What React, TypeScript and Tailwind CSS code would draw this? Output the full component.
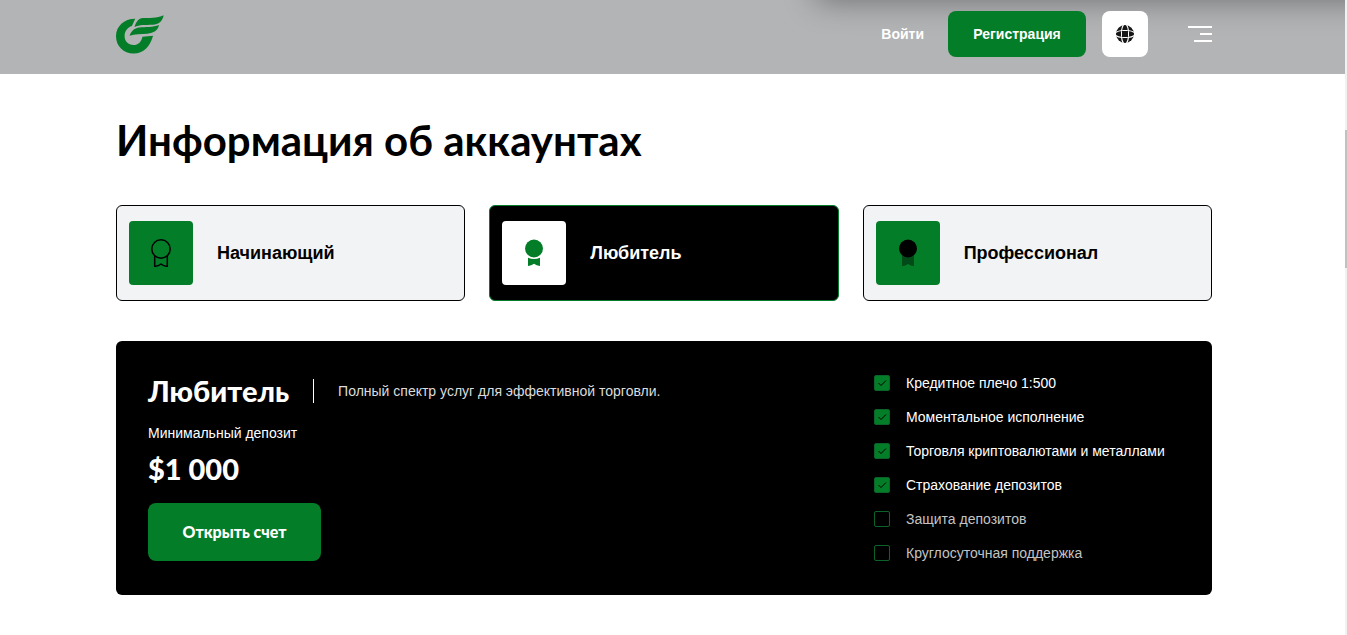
import { useState } from 'react';
import clsx from 'clsx';

type Level = 'outline' | 'split' | 'solid';

const accounts: { name: string; level: Level }[] = [
  { name: 'Начинающий', level: 'outline' },
  { name: 'Любитель', level: 'split' },
  { name: 'Профессионал', level: 'solid' },
];

const features = [
  { label: 'Кредитное плечо 1:500', enabled: true },
  { label: 'Моментальное исполнение', enabled: true },
  { label: 'Торговля криптовалютами и металлами', enabled: true },
  { label: 'Страхование депозитов', enabled: true },
  { label: 'Защита депозитов', enabled: false },
  { label: 'Круглосуточная поддержка', enabled: false },
];

function Logo() {
  return (
    <svg viewBox="48 43 145 117" className="h-[39px] w-12" fill="#047d28" aria-hidden="true">
      <path d="M106 54C72 54 48 77 48 107c0 30 23 52 53 52 31 0 49-21 59-54l-32 3c-4 16-13 25-27 25-16 0-27-11-27-26 0-16 9-27 22-31z" />
      <path d="M192 43c-20 9-46 8-63 9-13 2-19 9-25 27 15-8 32-6 55-7 18-1 29-10 33-29z" />
      <path d="M178 73c-18 7-42 6-60 7-14 2-24 10-29 25 16-6 34-4 54-6 19-2 31-9 35-26z" />
    </svg>
  );
}

function Globe() {
  return (
    <svg viewBox="0 0 20 20" className="size-5" aria-hidden="true">
      <circle cx="10" cy="10" r="9" fill="#161616" />
      <rect x="6.500" y="6.500" width="7" height="7" rx="1" fill="none" stroke="#fff" />
      <g fill="none" stroke="#fff" strokeWidth="1.200">
        <path d="M6.500 7Q6.800 3.500 8.500 0.500M13.500 7Q13.200 3.500 11.500 0.500M6.500 13Q6.800 16.500 8.500 19.500M13.500 13Q13.200 16.500 11.500 19.500" />
        <path d="M7 6.500Q3.500 6.800 0.500 8.500M7 13.500Q3.500 13.200 0.500 11.500M13 6.500Q16.500 6.800 19.500 8.500M13 13.500Q16.500 13.200 19.500 11.500" />
      </g>
    </svg>
  );
}

function Medal({ level }: { level: Level }) {
  if (level === 'outline') {
    return (
      <svg viewBox="0 0 32 32" className="size-8" fill="none" stroke="#000" strokeWidth="1.500" strokeLinejoin="round" aria-hidden="true">
        <circle cx="16" cy="12" r="9.200" />
        <path d="M9.700 19v10.200q3.500.300 6.300-2.200 2.800 2.500 6.300 2.200V19" />
      </svg>
    );
  }
  return (
    <svg viewBox="0 0 32 32" className={clsx('size-8', level === 'split' ? 'fill-[#047d28]' : 'fill-black')} aria-hidden="true">
      {level === 'split' ? (
        <path d="M10 20.800q6 2.500 12 0V29q-3.500-.200-6-2.200-2.500 2-6 2.200z" />
      ) : (
        <path d="M10 18h12v11.200q-3.500-.200-6-2.200-2.500 2-6 2.200z" opacity="0.400" />
      )}
      <circle cx="16" cy="11.500" r="9" />
    </svg>
  );
}

function Header() {
  return (
    <header className="relative flex items-start justify-between overflow-hidden bg-[#b3b4b6] pt-[11px] pr-[133px] pb-[17px] pl-[116px]">
      <div className="absolute -top-10 -right-10 left-[61%] h-9 shadow-[0_0_32px_4px_rgba(0,0,0,0.4)]" />
      <a href="#" aria-label="На главную" className="relative pt-1">
        <Logo />
      </a>
      <div className="relative flex items-center text-sm font-bold text-white">
        <a href="#">Войти</a>
        <button type="button" className="ml-6 h-[46px] w-[138px] rounded-lg bg-[#047d28]">
          Регистрация
        </button>
        <button type="button" aria-label="Язык" className="ml-4 flex size-[46px] items-center justify-center rounded-lg bg-white">
          <Globe />
        </button>
        <button type="button" aria-label="Меню" className="ml-10 flex w-6 flex-col items-end gap-[5px]">
          <span className="h-0.5 w-6 bg-white" />
          <span className="h-0.5 w-3 bg-white" />
          <span className="h-0.5 w-[18px] bg-white" />
        </button>
      </div>
    </header>
  );
}

function Feature({ label, enabled }: { label: string; enabled: boolean }) {
  return (
    <label className={clsx('flex h-5 items-center gap-4 text-sm', enabled ? 'text-white' : 'text-[#c4c4c4]')}>
      <span className="relative flex size-4">
        <input
          type="checkbox"
          defaultChecked={enabled}
          className="peer size-4 appearance-none rounded-xs border border-[#0b632a] checked:bg-[#047d28]"
        />
        <svg viewBox="0 0 16 16" className="pointer-events-none absolute inset-0 hidden size-4 peer-checked:block" fill="none" stroke="#000" aria-hidden="true">
          <path d="M4.500 8l2.500 2.500 5-5" />
        </svg>
      </span>
      {label}
    </label>
  );
}

export default function App() {
  const [active, setActive] = useState(1);

  return (
    <div className="flex min-h-screen bg-white font-['Liberation_Sans',Arial,sans-serif] text-black">
      <div className="min-w-0 flex-1">
        <Header />
        <main className="pt-10 pr-[133px] pb-10 pl-[116px]">
          <h1 className="font-['Lato',sans-serif] text-[42px] leading-[52px] font-bold">Информация об аккаунтах</h1>

          {/* Account switcher */}
          <div className="mt-[39px] grid grid-cols-3 gap-6">
            {accounts.map((account, i) => (
              <button
                key={account.name}
                type="button"
                onClick={() => setActive(i)}
                className={clsx(
                  'flex h-24 items-center gap-6 rounded-md border px-3 text-lg font-bold',
                  i === active ? 'border-[#047d28] bg-black text-white' : 'border-black bg-[#f2f3f5]',
                )}
              >
                <span className={clsx('flex size-16 items-center justify-center rounded-sm', i === active ? 'bg-white' : 'bg-[#047d28]')}>
                  <Medal level={account.level} />
                </span>
                {account.name}
              </button>
            ))}
          </div>

          {/* Account details */}
          <section className="mt-10 flex justify-between rounded-md bg-black p-8 text-white">
            <div>
              <div className="flex h-9 items-center">
                <h2 className="font-['Lato',sans-serif] text-[29px] leading-9 font-black">{accounts[active].name}</h2>
                <span className="mx-6 h-6 w-px bg-white" />
                <p className="text-sm text-[#dcdcdc]">Полный спектр услуг для эффективной торговли.</p>
              </div>
              <p className="mt-3.5 text-sm leading-5">Минимальный депозит</p>
              <p className="mt-2 font-['Lato',sans-serif] text-[29px] leading-9 font-black">$1 000</p>
              <button type="button" className="mt-4 h-[58px] w-[173px] rounded-lg bg-[#047d28] font-['Lato',sans-serif] text-base font-black">
                Открыть счет
              </button>
            </div>
            <div className="flex w-[306px] flex-col gap-3.5">
              {features.map((feature) => (
                <Feature key={feature.label} {...feature} />
              ))}
            </div>
          </section>
        </main>
      </div>
      {/* Scroll track */}
      <div className="w-0.5 bg-[#f1f1f1] pt-[130px]">
        <div className="h-[138px] bg-[#c1c1c1]" />
      </div>
    </div>
  );
}
